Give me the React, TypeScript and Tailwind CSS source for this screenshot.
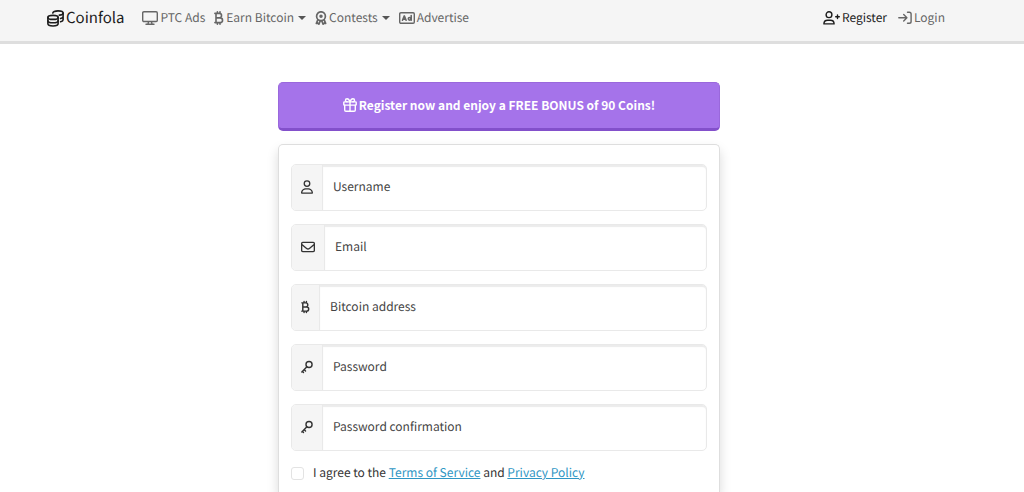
import type { ReactNode, SVGProps } from "react";
import { FaRegEnvelope, FaRegUser } from "react-icons/fa6";

type IconProps = SVGProps<SVGSVGElement>;

/* Shared stroke settings for the outline icons */
function Outline({ children, ...props }: IconProps) {
  return (
    <svg
      fill="none"
      stroke="currentColor"
      strokeWidth={1.5}
      strokeLinecap="round"
      strokeLinejoin="round"
      aria-hidden="true"
      {...props}
    >
      {children}
    </svg>
  );
}

const CoinsIcon = (props: IconProps) => (
  <Outline viewBox="0 0 17 17" strokeWidth={1.6} {...props}>
    <ellipse cx="6" cy="7.4" rx="5.1" ry="2" />
    <path d="M.9 7.400v6.400c0 1.200 2.300 2.200 5.100 2.200s5.100-1 5.100-2.200V7.400" />
    <path d="M.9 10.700c0 1.200 2.300 2.100 5.100 2.100s5.100-.9 5.100-2.100" />
    <path d="M5.800 3C6.200 1.800 8.400.9 11 .9c2.900 0 5.100.9 5.100 2.100S14.400 5 12.300 5.100" />
    <path d="M16.100 3v6.800c0 .9-1.100 1.600-2.500 2M16.100 6.400c0 1-1.100 1.700-2.500 2.100" />
  </Outline>
);

const DesktopIcon = (props: IconProps) => (
  <Outline viewBox="0 0 16 14" strokeWidth={1.4} {...props}>
    <rect x=".7" y=".7" width="14.600" height="9.800" rx="1.200" />
    <path d="M6.500 10.700 6 13.200M9.500 10.700l.5 2.500M4 13.300h8" />
  </Outline>
);

const BitcoinIcon = (props: IconProps) => (
  <Outline viewBox="0 0 10 14" strokeWidth={1.6} {...props}>
    <path d="M.9 2.400h4.400a2.200 2.200 0 0 1 0 4.500H2M5.500 6.900h.7a2.350 2.350 0 0 1 0 4.700H.9M2 2.400v9.200M3.400.8v1.500M6 .8v1.500M3.400 11.700v1.500M6 11.700v1.500" />
  </Outline>
);

const AwardIcon = (props: IconProps) => (
  <Outline viewBox="0 0 12 14" strokeWidth={1.7} {...props}>
    <circle cx="6" cy="5.200" r="4.400" />
    <circle cx="6" cy="5.200" r=".9" fill="currentColor" />
    <path d="M2.700 9 1.400 12.400l1.600-.2.900 1L5.200 10M9.300 9l1.300 3.400-1.600-.2-.9 1L6.800 10" />
  </Outline>
);

const AdIcon = (props: IconProps) => (
  <Outline viewBox="0 0 16 12" strokeWidth={1.4} {...props}>
    <rect x=".7" y=".7" width="14.600" height="10.600" rx="1.200" />
    <g strokeWidth={1.6}>
      <path d="M3.500 8.200 5.300 3.900l1.800 4.300M4.200 7.100h2.200M12.200 3.500v4.700" />
      <circle cx="10.600" cy="6.800" r="1.300" />
    </g>
  </Outline>
);

const UserPlusIcon = (props: IconProps) => (
  <Outline viewBox="0 0 17 14" strokeWidth={1.4} {...props}>
    <circle cx="6" cy="3.700" r="2.900" />
    <path d="M.9 12.900c0-2.200 1.600-3.700 3.700-3.700h2.800c2.100 0 3.700 1.500 3.700 3.700Z" />
    <path d="M14.500 4v3.600M12.700 5.800h3.600" />
  </Outline>
);

const LoginIcon = (props: IconProps) => (
  <Outline viewBox="0 0 14 14" strokeWidth={1.4} {...props}>
    <path d="M.8 6.700h8M5.700 3.500l3.200 3.200-3.200 3.200M9.500 1.200h1.800a1.800 1.800 0 0 1 1.800 1.800v7.400a1.800 1.800 0 0 1-1.800 1.800H9.500" />
  </Outline>
);

const GiftIcon = (props: IconProps) => (
  <Outline viewBox="0 0 14 14" strokeWidth={1.4} {...props}>
    <rect x=".8" y="3.900" width="12.400" height="3.200" rx=".6" />
    <path d="M1.700 7.200V12c0 .7.500 1.200 1.200 1.200h8.200c.7 0 1.200-.5 1.200-1.200V7.200M7 3.900v9.200" />
    <path d="M7 3.800C6.300 2 5.400.8 4.100.8c-2.200 0-2.200 3 0 3M7 3.800C7.700 2 8.600.8 9.900.8c2.200 0 2.200 3 0 3" />
  </Outline>
);

const KeyIcon = (props: IconProps) => (
  <Outline viewBox="0 0 13 14" {...props}>
    <circle cx="8.700" cy="4.300" r="3.300" />
    <path d="M6.400 6.700.9 12.300M3.400 9.800l1.500 1.500M1.500 11.700l1.200 1.200" />
  </Outline>
);

function NavLink({
  icon,
  caret = false,
  active = false,
  children,
}: {
  icon: ReactNode;
  caret?: boolean;
  active?: boolean;
  children: ReactNode;
}) {
  return (
    <a
      href="#"
      className={`flex items-center gap-0.5 text-[12px] leading-5 ${
        active ? "text-[#1c1c1c]" : "text-[#666] hover:text-[#1c1c1c]"
      }`}
    >
      {icon}
      <span>{children}</span>
      {caret && (
        <span className="ml-0.5 border-x-4 border-t-4 border-x-transparent border-t-[#555]" />
      )}
    </a>
  );
}

const fields = [
  { id: "username", label: "Username", type: "text", icon: <FaRegUser className="h-[14px] w-3" /> },
  { id: "email", label: "Email", type: "email", icon: <FaRegEnvelope className="size-[14px]" /> },
  { id: "address", label: "Bitcoin address", type: "text", icon: <BitcoinIcon className="h-[14px] w-[9px]" /> },
  { id: "password", label: "Password", type: "password", icon: <KeyIcon className="h-[14px] w-3" /> },
  { id: "confirm", label: "Password confirmation", type: "password", icon: <KeyIcon className="h-[14px] w-3" /> },
];

export default function App() {
  return (
    <div className="flex min-h-screen flex-col bg-white font-['Noto_Sans_CJK_SC',sans-serif] text-[#333] [text-rendering:geometricPrecision]">
      <header className="border-b-3 border-[#dedede] bg-[#f5f5f5] pr-[26px]">
        <nav className="mx-auto flex h-[41px] max-w-[904px] items-center pb-[5px]">
          <a href="#" className="mr-[18px] flex items-center gap-0.5 text-[15px] leading-6 text-[#1c1c1c]">
            <CoinsIcon className="size-[17px]" />
            Coinfola
          </a>
          <div className="flex items-center gap-[9px]">
            <NavLink icon={<DesktopIcon className="h-[14px] w-4" />}>PTC Ads</NavLink>
            <NavLink icon={<BitcoinIcon className="h-[14px] w-[10px]" />} caret>
              Earn Bitcoin
            </NavLink>
            <NavLink icon={<AwardIcon className="h-[14px] w-3" />} caret>
              Contests
            </NavLink>
            <NavLink icon={<AdIcon className="h-3 w-4" />}>Advertise</NavLink>
          </div>
          <div className="ml-auto flex items-center gap-[11px] pr-[6px]">
            <NavLink icon={<UserPlusIcon className="h-[14px] w-[17px]" />} active>
              Register
            </NavLink>
            <NavLink icon={<LoginIcon className="size-[14px]" />}>Login</NavLink>
          </div>
        </nav>
      </header>

      <main className="flex flex-1 flex-col pr-[26px] pt-[38px]">
        <div className="mx-auto flex w-full max-w-[442px] flex-1 flex-col gap-[13px]">
          <button
            type="button"
            className="flex h-[49px] items-center justify-center gap-0.5 rounded-[5px] border border-b-3 border-[#9a68dc] border-b-[#8350cb] bg-[#a573ea] pb-0.5 text-[12px] font-bold leading-5 text-white"
          >
            <GiftIcon className="size-[14px]" />
            Register now and enjoy a FREE BONUS of 90 Coins!
          </button>

          <form className="flex flex-1 flex-col gap-[13px] rounded-t-[5px] border border-b-0 border-[#dedede] px-3 pt-[19px] shadow-[0_6px_12px_rgba(0,0,0,0.15)]">
            {fields.map((field) => (
              <div key={field.id} className="flex h-[47px] rounded-[5px] border border-[#e9e9e9]">
                <span className="flex items-center rounded-l-[4px] border-r border-[#e9e9e9] bg-[#f5f5f5] px-[9px] pb-0.5 text-[#333]">
                  {field.icon}
                </span>
                <div className="relative flex-1">
                  <input
                    id={field.id}
                    type={field.type}
                    placeholder=" "
                    className="peer size-full rounded-r-[4px] px-[10px] text-[12px] shadow-[inset_0_2px_1px_#ececec] outline-none"
                  />
                  <label
                    htmlFor={field.id}
                    className="pointer-events-none absolute inset-y-0 left-[10px] flex items-center pb-px text-[12px] text-[#444] peer-[:not(:placeholder-shown)]:hidden"
                  >
                    {field.label}
                  </label>
                </div>
              </div>
            ))}

            <div className="-mt-px flex items-center gap-[9px] text-[12px] leading-5">
              <input
                id="agree"
                type="checkbox"
                className="size-[13px] appearance-none rounded-[3px] border border-[#e3e3e3] bg-white checked:bg-[#a573ea]"
              />
              <label htmlFor="agree">
                I agree to the{" "}
                <a href="#" className="text-[#2f96c4] underline">
                  Terms of Service
                </a>{" "}
                and{" "}
                <a href="#" className="text-[#2f96c4] underline">
                  Privacy Policy
                </a>
              </label>
            </div>
          </form>
        </div>
      </main>
    </div>
  );
}
